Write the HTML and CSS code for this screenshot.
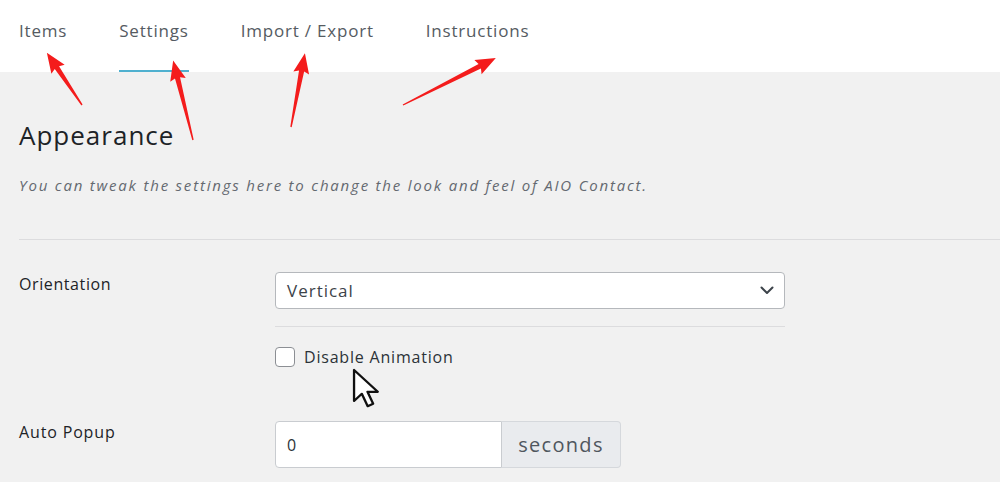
FILE: index.html
```html
<!DOCTYPE html>
<html>
<head>
<meta charset="utf-8">
<link rel="stylesheet" href="styles.css">
</head>
<body>
<nav class="tabs">
  <a class="tab">Items</a>
  <a class="tab active">Settings</a>
  <a class="tab">Import / Export</a>
  <a class="tab">Instructions</a>
</nav>
<main class="content">
  <h2 class="title">Appearance</h2>
  <p class="desc">You can tweak the settings here to change the look and feel of AIO Contact.</p>
  <hr class="sep">
  <div class="row">
    <div class="label">Orientation</div>
    <div class="field">
      <div class="select">
        <span>Vertical</span>
        <svg class="chev" width="14" height="9" viewBox="0 0 14 9"><path d="M1.5 1.5 L7 7 L12.5 1.5" fill="none" stroke="#3c434a" stroke-width="2" stroke-linecap="round" stroke-linejoin="round"/></svg>
      </div>
      <div class="subsep"></div>
      <label class="check"><span class="box"></span>Disable Animation</label>
    </div>
  </div>
  <div class="row row2">
    <div class="label">Auto Popup</div>
    <div class="field">
      <div class="group">
        <div class="input">0</div>
        <div class="addon">seconds</div>
      </div>
    </div>
  </div>
</main>
<svg class="overlay" width="1000" height="482" viewBox="0 0 1000 482">
  <g fill="#f41c1c">
    <g transform="translate(82,105) rotate(-123.9)"><polygon points="0,-0.7 45,-2.6 43,-8 63,0 43,8 45,2.6 0,0.7"/></g>
    <g transform="translate(193,140) rotate(-104)"><polygon points="0,-0.7 64,-2.6 62,-8 82,0 62,8 64,2.6 0,0.7"/></g>
    <g transform="translate(291,127) rotate(-79.3)"><polygon points="0,-0.7 57,-2.6 55,-8 75,0 55,8 57,2.6 0,0.7"/></g>
    <g transform="translate(403,105) rotate(-26.8)"><polygon points="0,-0.7 86,-2.6 84,-8 104,0 84,8 86,2.6 0,0.7"/></g>
  </g>
  <g transform="translate(353,369) scale(2.1,2)">
    <path d="M0.5 0.5 L0.5 16 L4.2 12.4 L7 18.6 L9.6 17.4 L6.9 11.4 L11.8 11.4 Z" fill="#fff" stroke="#111" stroke-width="1.1" stroke-linejoin="round"/>
  </g>
</svg>
</body>
</html>
```

FILE: styles.css
```css
* { box-sizing: border-box; }
html, body { margin: 0; padding: 0; }
body {
  background: #f1f1f1;
  font-family: "Open Sans", "Liberation Sans", sans-serif;
  color: #1d2327;
  width: 1000px;
  height: 482px;
  overflow: hidden;
  position: relative;
}
.tabs {
  background: #fff;
  height: 72px;
  display: flex;
  gap: 52px;
  padding-left: 19px;
  align-items: flex-start;
}
.tab {
  font-size: 17px;
  letter-spacing: 0.8px;
  color: #555b62;
  padding-top: 19px;
  height: 72px;
  border-bottom: 2px solid transparent;
}
.tab.active { border-bottom-color: #4fb0cf; }
.content { padding-left: 19px; }
.title {
  margin: 0;
  padding-top: 47px;
  font-size: 26px;
  letter-spacing: 1px;
  font-weight: 400;
  color: #1d2327;
  line-height: 32px;
}
.desc {
  margin: 24px 0 0;
  font-size: 15px;
  letter-spacing: 1.8px;
  font-style: italic;
  color: #646970;
  line-height: 20px;
}
.sep {
  margin: 44px 0 0;
  border: 0;
  border-top: 1px solid #dcdcde;
}
.row {
  display: flex;
  padding-top: 32px;
}
.label {
  width: 256px;
  font-size: 16px;
  letter-spacing: 0.6px;
  color: #1d2327;
  line-height: 22px;
  padding-top: 1px;
}
.field { width: 510px; }
.select {
  height: 37px;
  background: #fff;
  border: 1px solid #b5b8bc;
  border-radius: 4px;
  display: flex;
  align-items: center;
  justify-content: space-between;
  padding: 0 10px 0 11px;
  font-size: 17px;
  letter-spacing: 1px;
  color: #3c434a;
}
.subsep {
  margin-top: 17px;
  border-top: 1px solid #dcdcde;
}
.check {
  display: flex;
  align-items: center;
  gap: 9px;
  margin-top: 19px;
  font-size: 16px;
  letter-spacing: 0.8px;
  color: #2c3338;
}
.box {
  width: 20px;
  height: 20px;
  border: 1px solid #8c8f94;
  border-radius: 4px;
  background: #fff;
}
.row2 { padding-top: 53px; }
.row2 .label { padding-top: 0; letter-spacing: 0.85px; }
.group { display: flex; }
.input {
  width: 227px;
  height: 47px;
  background: #fff;
  border: 1px solid #c9ccd0;
  border-radius: 4px 0 0 4px;
  font-size: 16px;
  color: #2c3338;
  padding: 12px 0 0 11px;
}
.addon {
  width: 119px;
  height: 47px;
  background: #e9ebee;
  border: 1px solid #d5d8dc;
  border-left: 0;
  border-radius: 0 4px 4px 0;
  font-size: 20px;
  letter-spacing: 1.3px;
  color: #50575e;
  display: flex;
  align-items: center;
  justify-content: center;
}
.overlay { position: absolute; left: 0; top: 0; pointer-events: none; }
```
